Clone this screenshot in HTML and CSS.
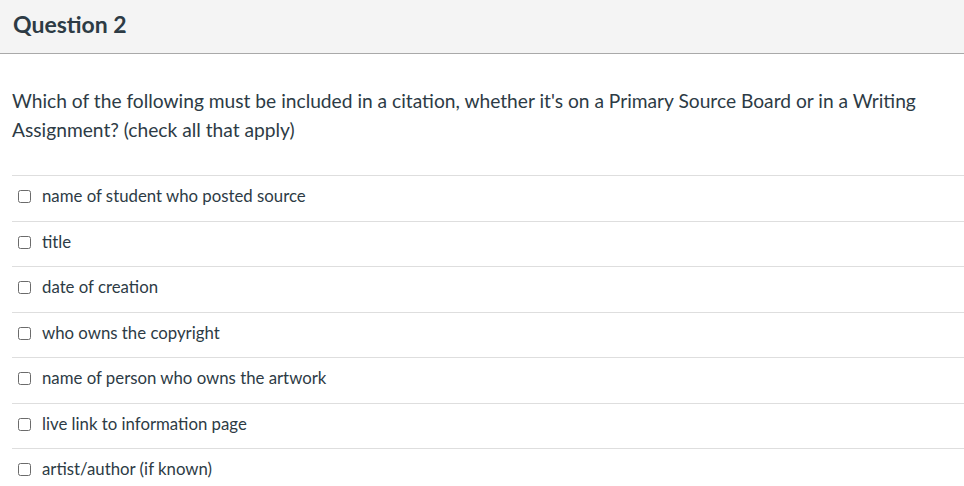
FILE: index.html
```html
<!DOCTYPE html>
<html>
<head>
<meta charset="utf-8">
<link rel="stylesheet" href="styles.css">
</head>
<body>
<div class="header"><h2 class="title">Question 2</h2></div>
<div class="question">Which of the following must be included in a citation, whether it's on a Primary Source Board or in a Writing Assignment? (check all that apply)</div>
<div class="answers">
  <div class="answer"><span class="box"></span><span class="label">name of student who posted source</span></div>
  <div class="answer"><span class="box"></span><span class="label">title</span></div>
  <div class="answer"><span class="box"></span><span class="label">date of creation</span></div>
  <div class="answer"><span class="box"></span><span class="label">who owns the copyright</span></div>
  <div class="answer"><span class="box"></span><span class="label">name of person who owns the artwork</span></div>
  <div class="answer"><span class="box"></span><span class="label">live link to information page</span></div>
  <div class="answer"><span class="box"></span><span class="label">artist/author (if known)</span></div>
</div>
</body>
</html>
```
FILE: styles.css
```css
html, body {
  margin: 0;
  padding: 0;
  background: #ffffff;
  font-family: Lato, "Liberation Sans", sans-serif;
  color: #2d3b45;
  overflow: hidden;
}
.header {
  box-sizing: border-box;
  background: #f4f4f4;
  border-bottom: 1px solid #a9a9a9;
  height: 54px;
  display: flex;
  align-items: center;
  padding-left: 13px;
}
.title {
  margin: -6px 0 0 0;
  font-size: 23px;
  font-weight: 700;
  line-height: 28px;
  color: #2d3b45;
}
.question {
  margin: 32px 30px 0 12px;
  font-size: 19.2px;
  line-height: 29px;
}
.answers {
  margin: 31px 0 0 12px;
}
.answer {
  box-sizing: border-box;
  height: 45.5px;
  border-top: 1px solid #dedede;
  padding: 9px 0 0 6px;
  display: flex;
  align-items: flex-start;
}
.answer .box {
  width: 13px;
  height: 13px;
  box-sizing: border-box;
  border: 1px solid #6b6b6b;
  border-radius: 2.5px;
  flex: none;
  margin-top: 5px;
}
.answer .label {
  margin-left: 11px;
  font-size: 16.8px;
  line-height: 22px;
}
```
